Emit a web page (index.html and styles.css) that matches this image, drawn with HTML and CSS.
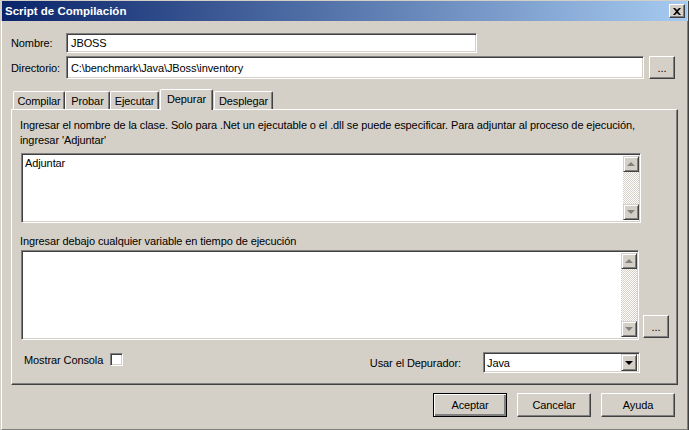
FILE: index.html
```html
<!DOCTYPE html>
<html lang="es">
<head>
    <meta charset="UTF-8">
    <title>Script de Compilación</title>
    <link rel="stylesheet" href="styles.css">
</head>
<body>
    <div class="window">
        <div class="titlebar">
            <span class="title">Script de Compilación</span>
            <span class="close">
                <svg width="8" height="7" viewBox="0 0 8 7"><path d="M0 0h2l2 2 2-2h2L5 3.5 8 7H6L4 5 2 7H0l3-3.5z" fill="#000"/></svg>
            </span>
        </div>
        <div class="content">
            <div class="field-row">
                <span class="lbl">Nombre:</span>
                <div class="edit name-edit">JBOSS</div>
            </div>
            <div class="field-row dir-row">
                <span class="lbl">Directorio:</span>
                <div class="edit dir-edit">C:\benchmark\Java\JBoss\inventory</div>
                <div class="btn browse">...</div>
            </div>

            <div class="tabs">
                <div class="tab t-compilar">Compilar</div>
                <div class="tab t-probar">Probar</div>
                <div class="tab t-ejecutar">Ejecutar</div>
                <div class="tab active">Depurar</div>
                <div class="tab t-desplegar">Desplegar</div>
            </div>
            <div class="panel">
                <p class="hint">Ingresar el nombre de la clase. Solo para .Net un ejecutable o el .dll se puede especificar. Para adjuntar al proceso de ejecución,<br>ingresar 'Adjuntar'</p>
                <div class="memo memo-class">
                    <div class="memo-text">Adjuntar</div>
                    <div class="vscroll">
                        <div class="sbtn"><span class="arrow up"></span></div>
                        <div class="track"></div>
                        <div class="sbtn"><span class="arrow down"></span></div>
                    </div>
                </div>
                <p class="hint second">Ingresar debajo cualquier variable en tiempo de ejecución</p>
                <div class="memo-row">
                    <div class="memo memo-vars">
                        <div class="memo-text"></div>
                        <div class="vscroll">
                            <div class="sbtn"><span class="arrow up"></span></div>
                            <div class="track"></div>
                            <div class="sbtn"><span class="arrow down"></span></div>
                        </div>
                    </div>
                    <div class="btn small-browse">...</div>
                </div>
                <div class="options">
                    <span class="opt-lbl">Mostrar Consola</span>
                    <span class="check"></span>
                    <span class="spacer"></span>
                    <span class="opt-lbl debugger-lbl">Usar el Depurador:</span>
                    <div class="combo">
                        <span class="combo-text">Java</span>
                        <div class="combo-btn"><span class="arrow down dark"></span></div>
                    </div>
                </div>
            </div>

            <div class="actions">
                <div class="btn action default">Aceptar</div>
                <div class="btn action">Cancelar</div>
                <div class="btn action">Ayuda</div>
            </div>
        </div>
    </div>
</body>
</html>
```

FILE: styles.css
```css
*{
    box-sizing: border-box;
}
body{
    margin: 0;
    background: #d4d0c8;
    font-family: "Liberation Sans", Arial, sans-serif;
    font-size: 11px;
    letter-spacing: -0.1px;
    color: #000;
}
.window{
    width: 689px;
    height: 430px;
    background: #d4d0c8;
    border-left: 1px solid #d4d0c8;
    border-right: 1px solid #404040;
    border-bottom: 1px solid #404040;
}
.content{
    height: 409px;
    border-left: 1px solid #fff;
    border-right: 1px solid #808080;
    border-bottom: 1px solid #808080;
    padding: 12px 12px 0 9px;
}

/* title */
.titlebar{
    height: 20px;
    margin: 1px 1px 0 1px;
    background: linear-gradient(to right, #0a246a, #a6caf0);
    display: flex;
    align-items: center;
    justify-content: space-between;
    padding: 0 2px 0 3px;
}
.title{
    color: #fff;
    font-weight: bold;
    font-size: 11.5px;
    letter-spacing: 0;
}
.close{
    width: 16px;
    height: 14px;
    background: #d4d0c8;
    border: 1px solid;
    border-color: #fff #404040 #404040 #fff;
    box-shadow: inset -1px -1px #808080;
    display: flex;
    align-items: center;
    justify-content: center;
}

/* classic 3d */
.btn{
    background: #d4d0c8;
    border: 1px solid;
    border-color: #fff #404040 #404040 #fff;
    box-shadow: inset -1px -1px #808080;
    display: flex;
    align-items: center;
    justify-content: center;
}
.edit,.memo,.combo{
    background: #fff;
    border: 1px solid;
    border-color: #808080 #fff #fff #808080;
    box-shadow: inset 1px 1px #404040, inset -1px -1px #d4d0c8;
}

/* top fields */
.field-row{
    display: flex;
    align-items: center;
    height: 20px;
}
.dir-row{
    margin-top: 3px;
    height: 23px;
}
.lbl{
    width: 55px;
}
.edit{
    height: 100%;
    padding: 0 4px;
    display: flex;
    align-items: center;
}
.name-edit{
    width: 411px;
}
.dir-edit{
    width: 579px;
}
.browse{
    width: 26px;
    height: 23px;
    margin-left: 5px;
}

/* tabs */
.tabs{
    display: flex;
    align-items: flex-end;
    margin-top: 10px;
    padding-left: 2px;
    height: 20px;
    position: relative;
    z-index: 1;
}
.tab{
    height: 18px;
    display: flex;
    align-items: center;
    justify-content: center;
    border: 1px solid #d4d0c8;
    border-bottom: none;
    border-left-color: #fff;
    border-top-color: #fff;
    border-right-color: #404040;
    border-radius: 2px 2px 0 0;
    box-shadow: inset -1px 0 #808080;
}
.t-compilar{ width: 52px; }
.t-probar{ width: 45px; }
.t-ejecutar{ width: 49px; }
.t-desplegar{ width: 59px; margin-left: 1px; }
.tab.active{
    width: 53px;
    height: 21px;
    margin: 0 0 -1px 1px;
    padding-bottom: 3px;
    background: #d4d0c8;
}

.panel{
    width: 667px;
    height: 276px;
    border: 1px solid;
    border-color: #fff #404040 #404040 #fff;
    box-shadow: inset -1px -1px #808080;
    padding: 8px 8px 0 8px;
}
.hint{
    margin: 0;
    line-height: 15px;
    white-space: nowrap;
}
.hint.second{
    margin-top: 11px;
}

/* memo boxes */
.memo{
    display: flex;
    padding: 2px 1px 2px 2px;
    margin-left: 1px;
}
.memo-class{
    margin-top: 5px;
    width: 620px;
    height: 70px;
}
.memo-text{
    flex: 1;
    padding: 1px 1px;
}
.vscroll{
    width: 16px;
    display: flex;
    flex-direction: column;
}
.track{
    flex: 1;
    background: repeating-conic-gradient(#d4d0c8 0 25%, #fff 0 50%) 0 0/2px 2px;
}
.sbtn{
    width: 16px;
    height: 16px;
    background: #d4d0c8;
    border: 1px solid;
    border-color: #d4d0c8 #404040 #404040 #d4d0c8;
    box-shadow: inset 1px 1px #fff, inset -1px -1px #808080;
    display: flex;
    align-items: center;
    justify-content: center;
}
.arrow{
    width: 0;
    height: 0;
    border-left: 4px solid transparent;
    border-right: 4px solid transparent;
}
.arrow.up{
    border-bottom: 4px solid #808080;
}
.arrow.down{
    border-top: 4px solid #808080;
}
.arrow.dark{
    border-top-color: #000;
}

.memo-row{
    display: flex;
    align-items: flex-end;
    margin-top: 1px;
}
.memo-vars{
    width: 619px;
    height: 90px;
}
.small-browse{
    width: 26px;
    height: 23px;
    margin: 0 0 2px 4px;
}

/* options */
.options{
    display: flex;
    align-items: flex-start;
    margin-top: 12px;
    padding-left: 4px;
    line-height: 14px;
}
.opt-lbl{
    margin-top: 1px;
}
.debugger-lbl{
    margin-top: 4px;
}
.check{
    width: 13px;
    height: 13px;
    margin: 1px 0 0 7px;
    background: #fff;
    border: 1px solid;
    border-color: #808080 #fff #fff #808080;
    box-shadow: inset 1px 1px #404040, inset -1px -1px #d4d0c8;
}
.spacer{
    flex: 1;
}
.combo{
    width: 157px;
    height: 21px;
    margin: 0 29px 0 22px;
    display: flex;
    align-items: center;
    padding: 2px;
}
.combo-text{
    flex: 1;
    padding-left: 1px;
}
.combo-btn{
    width: 16px;
    height: 17px;
    background: #d4d0c8;
    border: 1px solid;
    border-color: #d4d0c8 #404040 #404040 #d4d0c8;
    box-shadow: inset 1px 1px #fff, inset -1px -1px #808080;
    display: flex;
    align-items: center;
    justify-content: center;
}

/* bottom buttons */
.actions{
    display: flex;
    justify-content: flex-end;
    gap: 10px;
    margin-top: 8px;
}
.action{
    width: 74px;
    height: 24px;
}
.action.default{
    border-color: #000;
    box-shadow: inset 1px 1px #fff, inset -2px -2px #808080;
}
```
